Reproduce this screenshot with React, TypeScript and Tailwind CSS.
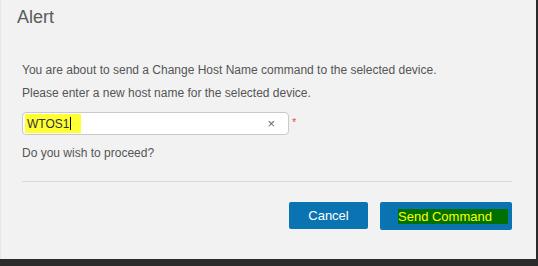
export default function App() {
  return (
    <div className="flex h-[266px] w-[538px] flex-col bg-[#2b2b2b] font-['Liberation_Sans',Arial,sans-serif]">
      <div className="flex h-[259px] w-[536px] flex-col border-l border-l-[#e6e6e6] bg-[#f2f2f2]">
        <div className="h-[48px] pl-[16px] pt-[7px]">
          <h1 className="text-[18px] leading-[20px] text-[#5a5a5a]">Alert</h1>
        </div>

        <div className="px-[21px] pt-[15px] text-[12px] leading-[14px] text-[#555]">
          <p>You are about to send a Change Host Name command to the selected device.</p>
          <p className="mt-[9px]">Please enter a new host name for the selected device.</p>

          <div className="mt-[12px] flex items-start">
            <div className="flex h-[23px] w-[267px] items-center rounded-[4px] border border-[#c9c9c9] bg-white pl-[2px] pr-[13px]">
              <span className="flex h-[19px] w-[56px] items-center bg-[#ffff33] pl-[2px] text-[12px] text-[#333]">
                WTOS1
                <span className="ml-[1px] h-[13px] w-px bg-black" />
              </span>
              <span className="ml-auto text-[13px] text-[#666]">×</span>
            </div>
            <span className="ml-[3px] mt-[3px] text-[11px] text-[#d9534f]">*</span>
          </div>

          <p className="mt-[11px]">Do you wish to proceed?</p>
        </div>

        <div className="ml-[21px] mr-[24px] mt-[21px] border-t border-[#d9d9d9]" />

        <div className="flex justify-end gap-[12px] pr-[24px] pt-[20px]">
          <button className="h-[27px] w-[79px] rounded-[2px] bg-[#0a74b3] text-[13px] text-white">
            Cancel
          </button>
          <button className="flex h-[28px] w-[132px] items-center rounded-[2px] bg-[#0a74b3] pl-[18px]">
            <span className="bg-[#007000] pr-[16px] text-[13px] leading-[15px] text-[#ffff00]">Send Command</span>
          </button>
        </div>
      </div>
    </div>
  );
}
